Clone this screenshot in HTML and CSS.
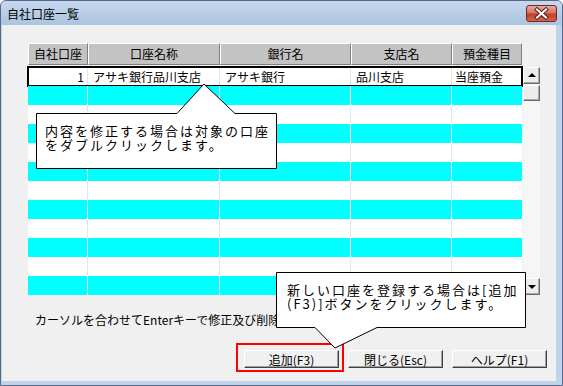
FILE: index.html
```html
<!DOCTYPE html>
<html lang="ja">
<head>
<meta charset="utf-8">
<title>自社口座一覧</title>
<link rel="stylesheet" href="styles.css">
</head>
<body>
<div class="window">
  <div class="titlebar">
    <span class="title">自社口座一覧</span>
    <div class="close">
      <svg width="29" height="15" viewBox="0 0 29 15">
        <path d="M10 3.5 L19 11.5 M19 3.5 L10 11.5" stroke="#4a1a14" stroke-width="4" stroke-linecap="square"/>
        <path d="M10 3.5 L19 11.5 M19 3.5 L10 11.5" stroke="#ffffff" stroke-width="2.2" stroke-linecap="square"/>
      </svg>
    </div>
  </div>
  <div class="body">
    <div class="grid-wrap">
      <div class="table">
        <div class="thead">
          <div class="th c1">自社口座</div>
          <div class="th c2">口座名称</div>
          <div class="th c3">銀行名</div>
          <div class="th c4">支店名</div>
          <div class="th c5">預金種目</div>
        </div>
        <div class="tbody">
          <div class="tr sel">
            <div class="td c1 num">1</div>
            <div class="td c2">アサキ銀行品川支店</div>
            <div class="td c3">アサキ銀行</div>
            <div class="td c4">品川支店</div>
            <div class="td c5">当座預金</div>
          </div>
          <div class="tr cyan"><div class="td c1"></div><div class="td c2"></div><div class="td c3"></div><div class="td c4"></div><div class="td c5"></div></div>
          <div class="tr"><div class="td c1"></div><div class="td c2"></div><div class="td c3"></div><div class="td c4"></div><div class="td c5"></div></div>
          <div class="tr cyan"><div class="td c1"></div><div class="td c2"></div><div class="td c3"></div><div class="td c4"></div><div class="td c5"></div></div>
          <div class="tr"><div class="td c1"></div><div class="td c2"></div><div class="td c3"></div><div class="td c4"></div><div class="td c5"></div></div>
          <div class="tr cyan"><div class="td c1"></div><div class="td c2"></div><div class="td c3"></div><div class="td c4"></div><div class="td c5"></div></div>
          <div class="tr"><div class="td c1"></div><div class="td c2"></div><div class="td c3"></div><div class="td c4"></div><div class="td c5"></div></div>
          <div class="tr cyan"><div class="td c1"></div><div class="td c2"></div><div class="td c3"></div><div class="td c4"></div><div class="td c5"></div></div>
          <div class="tr"><div class="td c1"></div><div class="td c2"></div><div class="td c3"></div><div class="td c4"></div><div class="td c5"></div></div>
          <div class="tr cyan"><div class="td c1"></div><div class="td c2"></div><div class="td c3"></div><div class="td c4"></div><div class="td c5"></div></div>
          <div class="tr"><div class="td c1"></div><div class="td c2"></div><div class="td c3"></div><div class="td c4"></div><div class="td c5"></div></div>
          <div class="tr cyan"><div class="td c1"></div><div class="td c2"></div><div class="td c3"></div><div class="td c4"></div><div class="td c5"></div></div>
        </div>
      </div>
      <div class="scrollbar">
        <div class="sb-btn"><span class="arrow-up"></span></div>
        <div class="sb-btn thumb"></div>
        <div class="sb-track"></div>
        <div class="sb-btn"><span class="arrow-down"></span></div>
      </div>
    </div>
    <p class="status">カーソルを合わせてEnterキーで修正及び削除ができます。</p>
    <div class="buttons">
      <button class="btn">追加(F3)</button>
      <button class="btn">閉じる(Esc)</button>
      <button class="btn">ヘルプ(F1)</button>
    </div>
  </div>

  <div class="highlight"></div>

  <svg class="callouts" width="563" height="386" viewBox="0 0 563 386">
    <path d="M36.5 113.5 H177 L204 84 L235 113.5 H276.5 V168.5 H36.5 Z" fill="#ffffff" stroke="#000000" stroke-width="1"/>
    <path d="M276.5 272.5 H525.5 V327.5 H377 L335 348 L315 327.5 H276.5 Z" fill="#ffffff" stroke="#000000" stroke-width="1"/>
  </svg>
  <div class="note note1"><div class="line">内容を修正する場合は対象の口座</div><div class="line">をダブルクリックします。</div></div>
  <div class="note note2"><div class="line">新しい口座を登録する場合は[追加</div><div class="line">(F3)]ボタンをクリックします。</div></div>
</div>
</body>
</html>
```

FILE: styles.css
```css
html, body {
  margin: 0;
  padding: 0;
}
body {
  width: 563px;
  height: 386px;
  overflow: hidden;
  font-family: "Noto Sans CJK JP", "Noto Sans", sans-serif;
  background: #ffffff;
}
.window {
  position: relative;
  width: 563px;
  height: 386px;
  box-sizing: border-box;
  border: 1px solid #56698a;
  border-radius: 6px 6px 0 0;
  background: #bfd3eb;
  display: flex;
  flex-direction: column;
}
.titlebar {
  height: 24px;
  display: flex;
  align-items: center;
  justify-content: space-between;
  padding: 0 5px 0 6px;
  background: linear-gradient(#c6d8ee, #aac4e0);
  border-radius: 5px 5px 0 0;
}
.title {
  font-size: 12px;
  line-height: 14px;
  color: #000000;
  margin-top: 1px;
}
.close {
  width: 29px;
  height: 15px;
  margin-top: 1px;
  border: 1px solid #6e2a22;
  border-radius: 3px;
  background: linear-gradient(#eaa79c 0%, #d8745f 45%, #c23e27 55%, #d5654c 100%);
  display: flex;
}
.body {
  flex: 0 0 auto;
  height: 356px;
  margin: 0 6px 0 1px;
  background: #f0f0f0;
  box-sizing: border-box;
  padding: 18px 0 0 26px;
  display: flex;
  flex-direction: column;
}
.grid-wrap {
  display: flex;
  align-items: flex-start;
  gap: 1px;
}
.table {
  width: 494px;
}
.thead {
  display: flex;
  height: 22px;
}
.th {
  box-sizing: border-box;
  height: 22px;
  background: #c3c3c3;
  border-top: 1px solid #ffffff;
  border-left: 1px solid #ffffff;
  border-right: 1px solid #7f7f7f;
  border-bottom: 1px solid #7f7f7f;
  font-size: 12px;
  line-height: 20px;
  text-align: center;
  color: #000000;
}
.c1 { width: 60px; }
.c2 { width: 132px; }
.c3 { width: 131px; }
.c4 { width: 101px; }
.c5 { width: 70px; }
.tbody {
  margin-top: 2px;
}
.tr {
  display: flex;
  height: 19px;
  background: #ffffff;
  position: relative;
}
.tr.cyan {
  background: #00ffff;
}
.td {
  box-sizing: border-box;
  height: 19px;
  border-right: 1px solid #e6e6e6;
  font-size: 12px;
  line-height: 19px;
  padding-left: 5px;
  color: #000000;
  white-space: nowrap;
  overflow: hidden;
}
.tr.cyan .td {
  border-right-color: #ffffff;
}
.td.c1 {
  padding-left: 0;
}
.td.c5 {
  padding-left: 3px;
  border-right: none;
}
.td.num {
  text-align: right;
  padding-right: 3px;
}
.tr.sel::after {
  content: "";
  position: absolute;
  left: -1px;
  right: -1px;
  top: -1px;
  bottom: -1px;
  border: 2px solid #000000;
}
.scrollbar {
  margin-top: 24px;
  width: 17px;
  height: 228px;
  display: flex;
  flex-direction: column;
  background: #f6f6f6;
}
.sb-btn {
  box-sizing: border-box;
  width: 17px;
  height: 17px;
  flex: 0 0 17px;
  background: #ececec;
  border-top: 1px solid #ffffff;
  border-left: 1px solid #ffffff;
  border-right: 1px solid #6a6a6a;
  border-bottom: 1px solid #6a6a6a;
  box-shadow: inset -1px -1px 0 #a8a8a8;
  display: flex;
  align-items: center;
  justify-content: center;
}
.thumb {
  flex: 0 0 16px;
  height: 16px;
  margin-top: 1px;
}
.sb-track {
  flex: 1 1 auto;
}
.arrow-up {
  width: 0;
  height: 0;
  border-left: 4px solid transparent;
  border-right: 4px solid transparent;
  border-bottom: 4px solid #000000;
  margin-top: -1px;
}
.arrow-down {
  width: 0;
  height: 0;
  border-left: 4px solid transparent;
  border-right: 4px solid transparent;
  border-top: 4px solid #000000;
}
.status {
  width: 241px;
  overflow: hidden;
  margin: 18px 0 0 7px;
  font-size: 12px;
  line-height: 14px;
  color: #000000;
  white-space: nowrap;
}
.buttons {
  display: flex;
  justify-content: flex-end;
  gap: 9px;
  margin-top: 23px;
  padding-right: 9px;
}
.btn {
  box-sizing: border-box;
  width: 95px;
  height: 18px;
  padding: 0;
  margin: 0;
  font-family: "Noto Sans CJK JP", "Noto Sans", sans-serif;
  font-size: 12px;
  line-height: 15px;
  color: #000000;
  background: #f0f0f0;
  border-top: 1px solid #ffffff;
  border-left: 1px solid #ffffff;
  border-right: 1px solid #404040;
  border-bottom: 1px solid #404040;
  box-shadow: inset -1px -1px 0 #a0a0a0;
  border-radius: 0;
}
.highlight {
  position: absolute;
  left: 235px;
  top: 342px;
  width: 108px;
  height: 29px;
  box-sizing: border-box;
  border: 2px solid #ff0000;
}
.callouts {
  position: absolute;
  left: -1px;
  top: -1px;
  pointer-events: none;
}
.note {
  position: absolute;
  font-size: 13px;
  letter-spacing: 2px;
  color: #000000;
  white-space: nowrap;
}
.note .line {
  height: 14px;
  line-height: 14px;
}
.note1 {
  left: 44px;
  top: 123px;
}
.note2 {
  left: 286px;
  top: 282px;
}
```
